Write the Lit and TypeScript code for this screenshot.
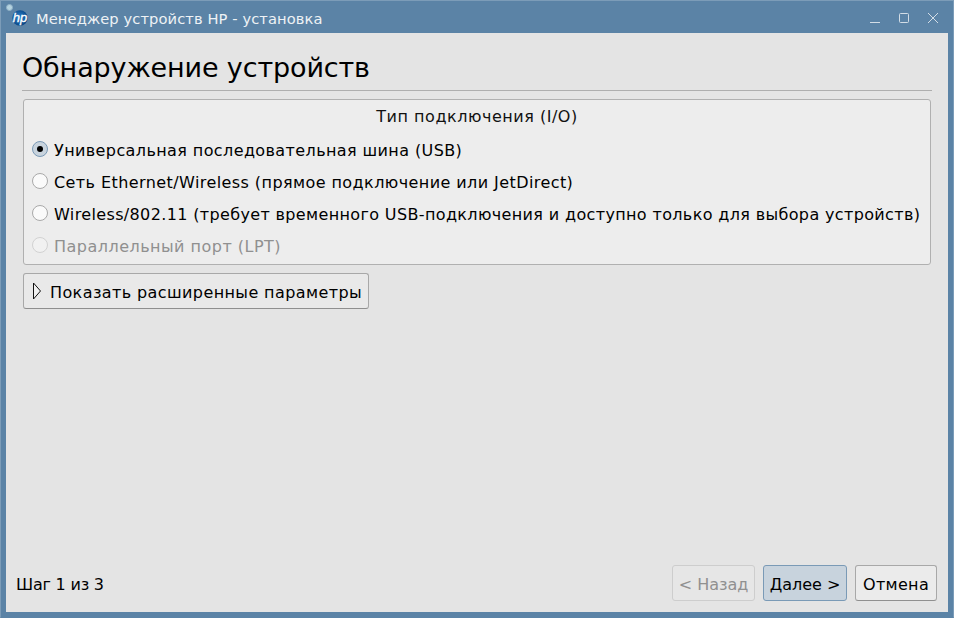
import { LitElement, html, css } from "lit";
import { customElement } from "lit/decorators.js";

@customElement("app-root")
export class AppRoot extends LitElement {
  static styles = css`
    :host { display: block; width: 954px; height: 618px; font-family: "DejaVu Sans", sans-serif; font-size: 16px; color: #000; }
    * { box-sizing: border-box; }
    .frame { position: relative; width: 954px; height: 618px; background: #5b83a6; border: 1px solid #7c9cb8; border-bottom-color: #5b83a6; display: flex; flex-direction: column; padding: 0 5px 5px; }
    .dot { position: absolute; left: 5px; top: 3px; width: 7px; height: 7px; border-radius: 50%; background: #b5d3e0; border: 1px solid #8fb0c5; }
    .titlebar { height: 32px; flex: none; display: flex; align-items: center; color: #eef2f5; font-size: 14.67px; letter-spacing: 0.1px; padding: 5px 0 0 6px; }
    .logo { width: 16px; height: 16px; margin-right: 8px; flex: none; margin-top: -3px; }
    .title { flex: 1; margin-top: -3px; }
    .wbtns { display: flex; align-items: center; gap: 19px; padding-right: 10px; margin-top: -3px; }
    .wbtns svg { display: block; width: 10px; height: 10px; }
    .client { flex: 1; background: #e4e4e4; display: flex; flex-direction: column; padding: 15px 11px 11px 11px; }
    .heading { font-size: 27px; line-height: 39px; letter-spacing: -0.14px; margin-left: 5px; height: 42px; }
    .rule { height: 1px; background: #aeaeae; margin: 0 5px; }
    .group { margin: 8px 6px 0 6px; height: 166px; background: #ededed; border: 1px solid #b0b0b0; border-radius: 3px; padding: 0 8px; }
    .grouptitle { text-align: center; height: 33px; line-height: 34px; letter-spacing: 0.52px; color: #111; }
    .opt { height: 32px; display: flex; align-items: center; gap: 6px; white-space: nowrap; }
    .opt .txt { padding-top: 2px; }
    .ls-usb { letter-spacing: 0.395px; }
    .ls-eth { letter-spacing: 0.42px; }
    .ls-wifi { letter-spacing: 0.36px; }
    .opt.dis { color: #909090; letter-spacing: 0.48px; }
    .radio { width: 16px; height: 16px; flex: none; border-radius: 50%; background: #fafafa; border: 1px solid #a9a9a9; display: flex; align-items: center; justify-content: center; }
    .radio.on { background: #c8d3dd; border-color: #7a9ab6; }
    .radio.on::after { content: ""; width: 6px; height: 6px; border-radius: 50%; background: #000; }
    .radio.dis { background: #f1f1f1; border-color: #d2d2d2; }
    .adv { margin: 8px 0 0 6px; align-self: flex-start; width: 346px; height: 36px; background: #e9e9e9; border: 1px solid #a8a8a8; border-bottom-color: #8f8f8f; border-radius: 3px; display: flex; align-items: center; padding: 0 0 0 8px; gap: 8px; font: inherit; color: inherit; letter-spacing: 0.4px; }
    .adv svg { width: 10px; height: 18px; flex: none; }
    .adv .txt { padding-top: 2px; }
    .spacer { flex: 1; }
    .footer { display: flex; align-items: center; height: 36px; }
    .step { flex: 1; letter-spacing: -0.2px; padding-top: 2px; margin-left: -1px; }
    button.b { height: 36px; font: inherit; border-radius: 3px; padding: 2px 0 0; margin-left: 8px; }
    .back { width: 83px; background: #e6e6e6; color: #909090; border: 1px solid #cdcdcd; }
    .next { width: 84px; background: #c8d3dd; color: #000; border: 1px solid #7a9ab6; }
    .cancel { width: 82px; background: #ebebeb; color: #000; border: 1px solid #a8a8a8; border-bottom-color: #8f8f8f; letter-spacing: 0.33px; }
  `;

  render() {
    return html`
      <div class="frame">
        <div class="dot"></div>
        <div class="titlebar">
          <svg class="logo" viewBox="0 0 16 16">
            <defs>
              <radialGradient id="hpg" cx="0.45" cy="0.45" r="0.6">
                <stop offset="0" stop-color="#2b86cf" />
                <stop offset="1" stop-color="#07407f" />
              </radialGradient>
            </defs>
            <circle cx="8" cy="8" r="7.7" fill="url(#hpg)" />
            <text x="8" y="11.5" text-anchor="middle" font-family="Liberation Sans" font-style="italic" font-size="13" fill="#fff" stroke="#fff" stroke-width="0.3">hp</text>
          </svg>
          <div class="title">Менеджер устройств HP - установка</div>
          <div class="wbtns">
            <svg viewBox="0 0 10 10"><path d="M0 9.5H10" stroke="#d3dde6" stroke-width="1" fill="none"/></svg>
            <svg viewBox="0 0 10 10"><rect x=".5" y=".5" width="9" height="9" rx="1" stroke="#d3dde6" fill="none"/></svg>
            <svg viewBox="0 0 10 10"><path d="M0 0L10 10M10 0L0 10" stroke="#d3dde6" fill="none"/></svg>
          </div>
        </div>
        <div class="client">
          <div class="heading">Обнаружение устройств</div>
          <div class="rule"></div>
          <div class="group">
            <div class="grouptitle">Тип подключения (I/O)</div>
            <div class="opt ls-usb"><span class="radio on"></span><span class="txt">Универсальная последовательная шина (USB)</span></div>
            <div class="opt ls-eth"><span class="radio"></span><span class="txt">Сеть Ethernet/Wireless (прямое подключение или JetDirect)</span></div>
            <div class="opt ls-wifi"><span class="radio"></span><span class="txt">Wireless/802.11 (требует временного USB-подключения и доступно только для выбора устройств)</span></div>
            <div class="opt dis"><span class="radio dis"></span><span class="txt">Параллельный порт (LPT)</span></div>
          </div>
          <button class="adv">
            <svg viewBox="0 0 10 18"><path d="M1.5 1L8.5 9L1.5 17Z" fill="#f0f0f0" stroke="#111" stroke-width="1"/></svg>
            <span class="txt">Показать расширенные параметры</span>
          </button>
          <div class="spacer"></div>
          <div class="footer">
            <div class="step">Шаг 1 из 3</div>
            <button class="b back">&lt; Назад</button>
            <button class="b next">Далее &gt;</button>
            <button class="b cancel">Отмена</button>
          </div>
        </div>
      </div>
    `;
  }
}
